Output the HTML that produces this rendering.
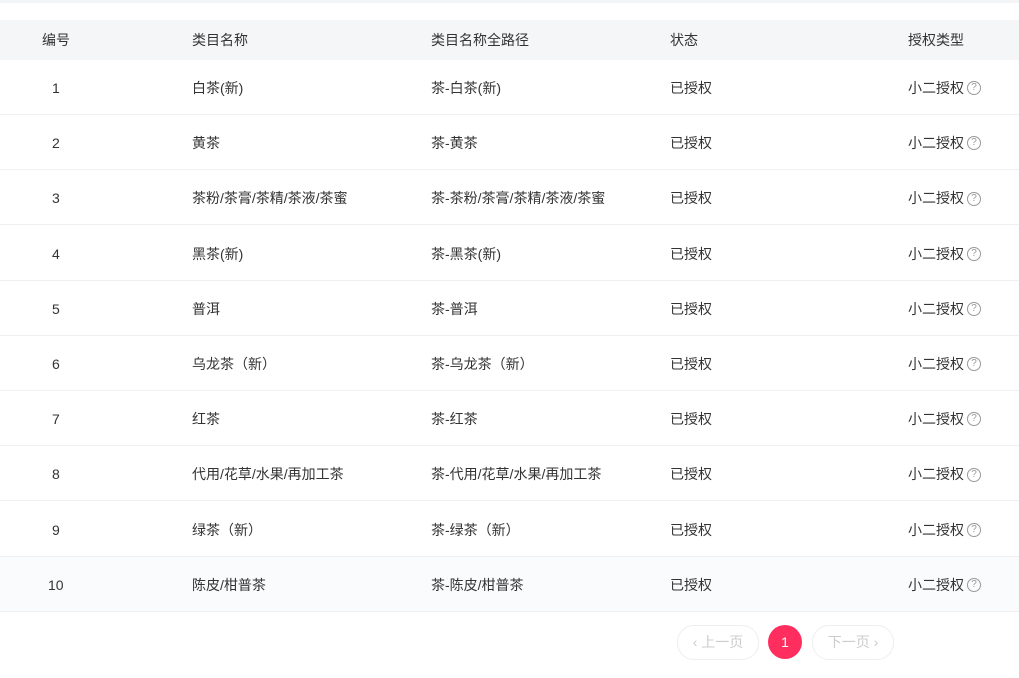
<!DOCTYPE html>
<html><head><meta charset="utf-8"><style>
body{margin:0;width:1019px;height:678px;background:#fff;font-family:"Liberation Sans","Noto Sans CJK SC",sans-serif;font-size:14px;color:#333;position:relative;overflow:hidden}
.top{position:absolute;left:0;top:0;width:1019px;height:3px;background:#f3f4f6}
.hd{position:absolute;left:0;top:20px;width:1019px;height:40px;background:#f5f6f8}
.row{position:absolute;left:0;width:1019px;height:54px;border-bottom:1px solid #eef0f3}
.c{position:absolute;top:0;line-height:inherit;white-space:nowrap}
.hd .c{line-height:40px}
.row .c{line-height:56px}
.q{display:inline-block;width:12px;height:12px;border:1px solid #999;border-radius:50%;font-size:10px;line-height:12px;text-align:center;color:#999;vertical-align:middle;margin-left:3px;margin-top:-2px}
.pg{position:absolute;top:625px;height:33px;border:1px solid #eee;border-radius:17px;color:#ccc;font-size:14px;line-height:33px;text-align:center}
</style></head><body>
<div class="top"></div>
<div class="hd"><span class="c" style="left:42px">编号</span><span class="c" style="left:192px">类目名称</span><span class="c" style="left:431px">类目名称全路径</span><span class="c" style="left:670px">状态</span><span class="c" style="left:908px">授权类型</span></div>
<div id="rows"></div>
<div class="pg" style="left:677px;width:80px">‹ 上一页</div>
<div style="position:absolute;left:768px;top:625px;width:34px;height:34px;border-radius:50%;background:#ff2e5f;color:#fff;text-align:center;line-height:34px;font-size:14px">1</div>
<div class="pg" style="left:812px;width:80px">下一页 ›</div>
<script>
var d=[["白茶(新)","茶-白茶(新)"],["黄茶","茶-黄茶"],["茶粉/茶膏/茶精/茶液/茶蜜","茶-茶粉/茶膏/茶精/茶液/茶蜜"],["黑茶(新)","茶-黑茶(新)"],["普洱","茶-普洱"],["乌龙茶（新）","茶-乌龙茶（新）"],["红茶","茶-红茶"],["代用/花草/水果/再加工茶","茶-代用/花草/水果/再加工茶"],["绿茶（新）","茶-绿茶（新）"],["陈皮/柑普茶","茶-陈皮/柑普茶"]];
var h="";d.forEach(function(r,i){var y=60+i*55.2;h+='<div class="row" style="top:'+y+'px;'+(i==9?'background:#fafbfd':'')+'"><span class="c" style="left:'+(i==9?48:52)+'px">'+(i+1)+'</span><span class="c" style="left:192px">'+r[0]+'</span><span class="c" style="left:431px">'+r[1]+'</span><span class="c" style="left:670px">已授权</span><span class="c" style="left:908px">小二授权<span class="q">?</span></span></div>';});
document.getElementById("rows").innerHTML=h;
</script>
</body></html>
